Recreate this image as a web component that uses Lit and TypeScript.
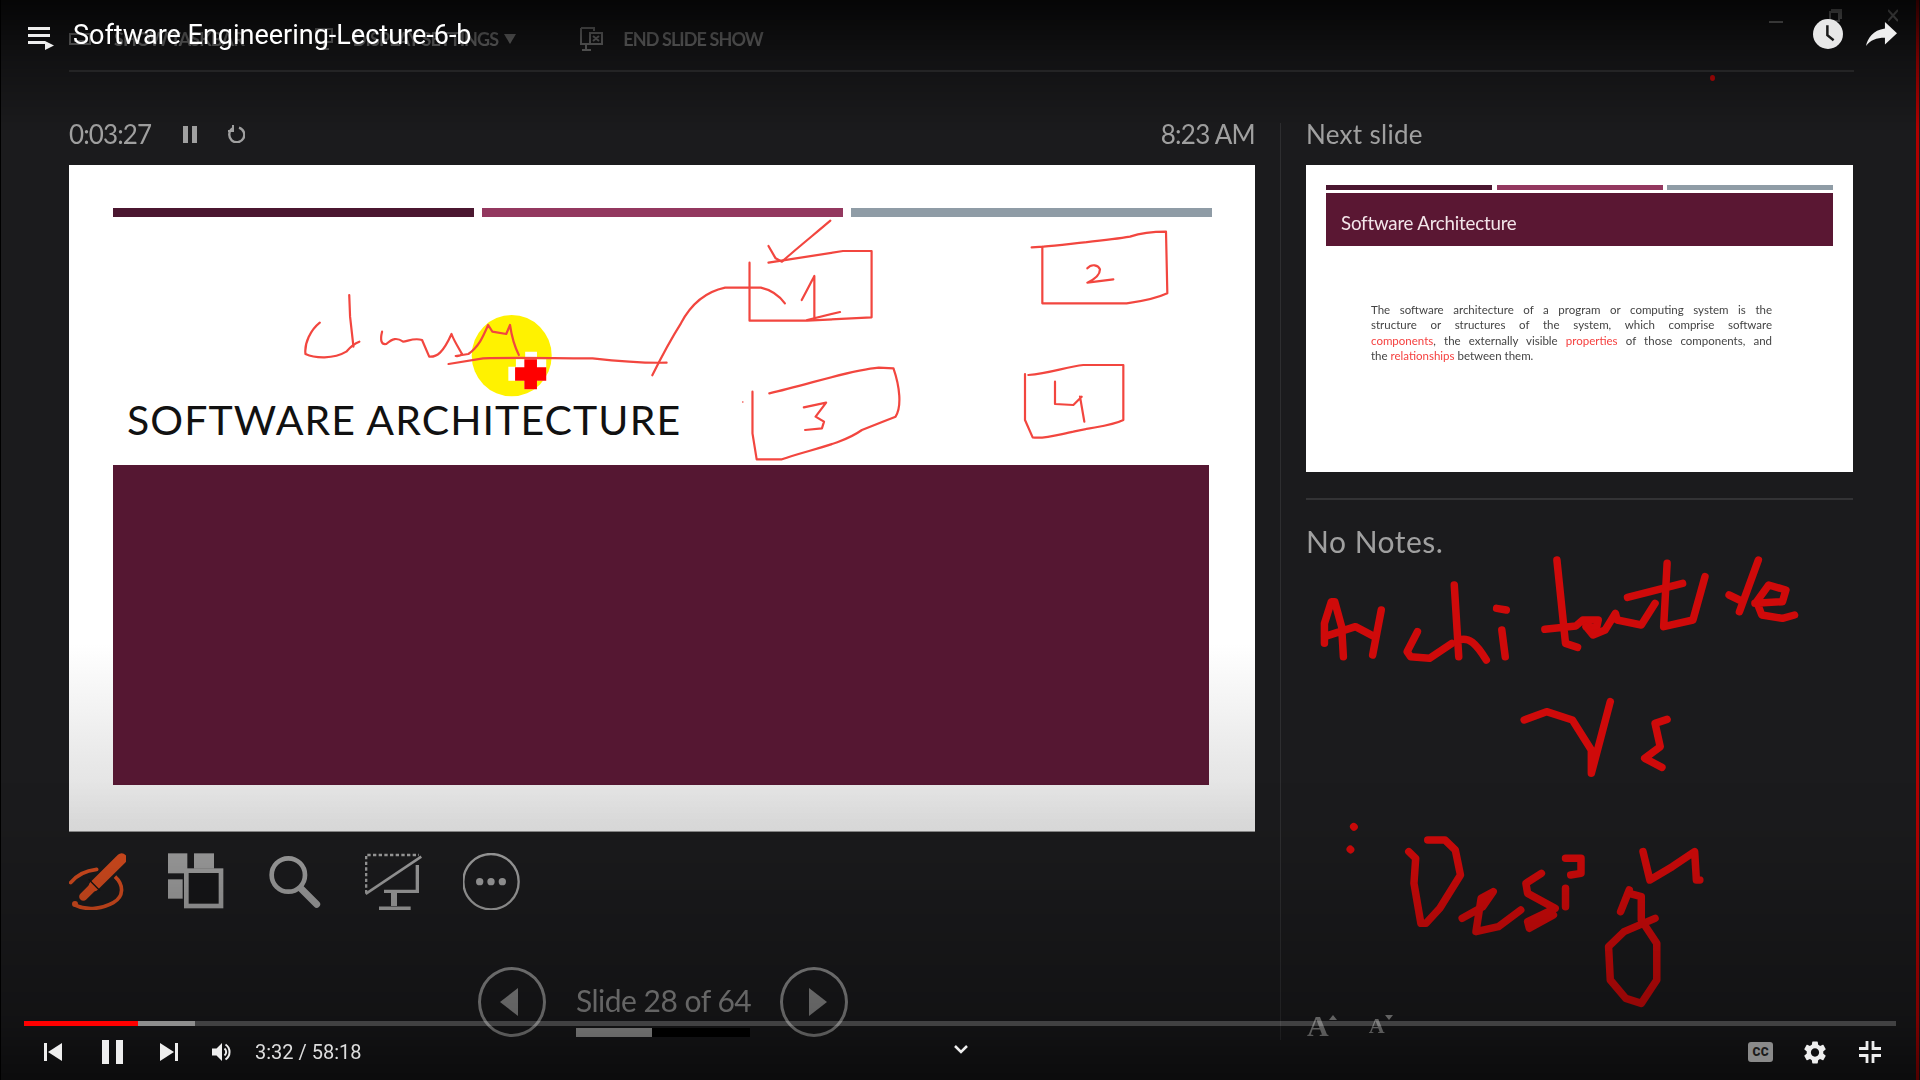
import { LitElement, html, css, svg } from 'lit';
import { customElement } from 'lit/decorators.js';

// pen strokes, in the coordinates of each overlay's viewBox
const SLIDE_INK_LEFT = [
  'M142 368C120 390 105 430 108 462C130 475 175 478 205 455C215 440 225 430 236 425',
  'M212 285L214 350L222 440',
  'M290 395C285 420 288 435 300 432C315 415 325 412 340 425C350 425 365 412 385 420L402 470C420 472 435 458 455 402C460 420 470 440 480 462C475 470 470 468 465 468L495 462C520 440 530 410 542 375L552 395L585 402L594 375C598 410 605 440 615 465',
  'M448 492L530 475C600 472 700 475 790 475C840 482 900 490 966 488',
  'M932 526C950 480 970 430 1000 370C1025 310 1060 275 1105 263L1190 263C1215 270 1235 290 1247 310',
  'M1163 188L1163 362L1300 362L1453 352L1453 153L1385 153L1208 188',
  'M1208 138L1225 175L1240 185C1280 140 1320 100 1355 62',
  'M1287 300C1300 270 1310 245 1317 228L1317 360M1300 360L1378 336',
  'M1170 575L1170 700L1180 778L1240 778C1300 750 1380 735 1430 690L1510 650C1525 620 1520 560 1505 505L1470 503C1400 510 1300 555 1210 580',
  'M1292 622L1345 608L1320 650L1340 665L1335 685L1295 690',
];

const SLIDE_INK_RIGHT = [
  'M395 142L430 140C520 130 620 122 690 110C720 100 760 95 798 95L802 280C770 295 720 305 680 310L427 310L427 140',
  'M562 205C575 190 595 195 600 208C600 225 580 240 562 248L640 238',
  'M375 522L375 660L398 712C430 718 470 705 520 695C580 680 630 680 670 660L670 495L550 495C500 500 450 520 385 525',
  'M465 545L465 612L520 615L545 590M540 590L553 665',
];

const NOTES_INK = [
  'M100 370L100 310L120 245L130 245L150 320L155 410M100 350L190 320L245 350M265 270L240 405',
  'M370 335L340 395L350 410L405 415L470 370',
  'M477 195L490 410M490 360C520 350 540 370 570 420',
  'M600 265L628 270M615 330L625 410',
  'M775 120L800 370L835 382M740 328L830 318L850 300L895 300L890 325L860 320',
  'M860 320L880 345L915 330L945 280L950 300L1020 315L1060 250',
  'M980 232L1140 190',
  'M1095 130L1085 320L1170 300L1205 170',
  'M1360 120L1305 275M1275 225L1305 240',
  'M1350 250L1430 245L1440 210L1390 195L1355 245L1370 285L1430 295L1465 285',
  'M680 600L745 575L820 600L875 690L875 760L930 545',
  'M1095 598L1060 610L1075 680L1030 715L1080 742',
  'M185 920L186 921M175 988L176 989',
  'M345 995L365 1015L360 1090L380 1210L395 1210L435 1165L495 1065L480 990L450 960L400 960',
  'M500 1195L560 1160L590 1115L555 1135L540 1235L605 1220L670 1170',
  'M730 1060L685 1090L690 1120L770 1165L690 1205L695 1225L765 1185',
  'M800 1105L800 1160',
  'M800 1015L845 1015L845 1060L815 1065',
  'M985 1110L960 1175',
  'M985 1120L1020 1130L1020 1200L1065 1270L1065 1380L1020 1450L975 1435L930 1380L925 1280L970 1235L1060 1195',
  'M1025 995L1045 1080L1110 1040L1175 995L1180 1080L1190 1080',
];

const strokes = (paths: string[]) => paths.map((d) => svg`<path d=${d}></path>`);

@customElement('app-root')
export class AppRoot extends LitElement {
  static styles = css`
    :host {
      display: block;
      width: 1920px;
      height: 1080px;
      overflow: hidden;
      position: relative;
      background: #1b1b1d;
      font-family: Lato, 'Liberation Sans', sans-serif;
    }

    /* the recorded PowerPoint window */
    .presenter {
      width: 1920px;
      height: 1080px;
      position: relative;
      filter: blur(0.5px);
    }

    .toolbar {
      margin: 0 66px 0 69px;
      padding-top: 7px;
      box-sizing: border-box;
      border-bottom: 2px solid #333335;
      height: 72px;
      display: flex;
      align-items: center;
      color: #858585;
      font-size: 18px;
      font-weight: 700;
      letter-spacing: -0.9px;
    }
    .toolbar svg { fill: none; stroke: #858585; stroke-width: 2; }
    .tb-show { margin-left: 23px; }
    .tb-icon2 { margin-left: 71px; }
    .tb-display { margin-left: 20px; }
    .toolbar .tb-caret { margin-left: 6px; fill: #858585; stroke: none; }
    .tb-icon3 { margin-left: 64px; }
    .tb-end { margin-left: 20px; }

    .win {
      position: absolute;
      top: 9px;
      right: 22px;
      display: flex;
      gap: 46px;
      align-items: flex-start;
    }
    .win svg { fill: none; stroke: #909090; stroke-width: 2; }

    .body {
      display: grid;
      grid-template-columns: 1186px 51px 547px;
      padding: 45px 0 0 69px;
      height: 963px;
    }

    .stat {
      height: 34px;
      margin-bottom: 14px;
      display: flex;
      align-items: center;
      color: #a0a0a0;
      font-size: 26px;
      font-weight: 400;
    }
    .stat .timer { letter-spacing: -0.9px; }
    .stat svg { margin-left: 32px; }
    .stat .replay { margin-left: 30px; }
    .stat .clock { margin-left: auto; letter-spacing: -0.7px; }
    .stat .next { letter-spacing: 0.3px; }

    .slide {
      position: relative;
      height: 667px;
      box-sizing: border-box;
      padding: 43px 43px 46px 44px;
      background: linear-gradient(#fff 72%, #e8e8e8 90%, #dedede);
      border-bottom: 1px solid #888;
      display: flex;
      flex-direction: column;
      color: #111;
    }
    .bars { display: flex; gap: 8.5px; height: 9px; flex-shrink: 0; }
    .bars div { flex: 1; }
    .bar-a { background: #4b1730; }
    .bar-b { background: #93385f; }
    .bar-c { background: #8f9ca6; }
    .slide h1 {
      margin: 178px 0 20px 14px;
      height: 50px;
      line-height: 50px;
      font-size: 41px;
      font-weight: 400;
      letter-spacing: 1.1px;
      white-space: nowrap;
    }
    .panel { flex: 1; margin-right: 3px; background: #551732; }

    .ink {
      position: absolute;
      fill: none;
      stroke-linecap: round;
      stroke-linejoin: round;
    }
    .ink path { vector-effect: non-scaling-stroke; }
    .ink-slide { stroke: #f2463f; stroke-width: 2.2px; }
    .ink-a { left: 191px; top: 35px; }
    .ink-b { left: 831px; top: 35px; }
    .ink-notes {
      left: 1290px;
      top: 520px;
      stroke: #cf0a0a;
      stroke-width: 7.5px;
    }
    .laser {
      position: absolute;
      left: 1710px;
      top: 75px;
      width: 5px;
      height: 6px;
      border-radius: 50%;
      background: #c10808;
    }
    .edge-right {
      position: absolute;
      left: 1916px;
      top: 0;
      width: 3px;
      height: 1080px;
      background: #b00000;
    }
    .edge-left {
      position: absolute;
      left: 0;
      top: 0;
      width: 1px;
      height: 1080px;
      background: #000;
    }

    .tools {
      margin-top: 21px;
      height: 57px;
      display: flex;
      gap: 41.5px;
    }
    .tools svg { fill: none; stroke: #9c9c9c; display: block; }

    .nav {
      margin-top: 57px;
      display: flex;
      justify-content: center;
      gap: 30px;
      padding-left: 2px;
      color: #8c8c8c;
    }
    .round {
      width: 68px;
      height: 70px;
      box-sizing: border-box;
      border: 3px solid #8a8a8a;
      border-radius: 50%;
      display: flex;
      align-items: center;
      justify-content: center;
    }
    .round svg { fill: #8a8a8a; }
    .round .back { margin-right: 6px; }
    .round .fwd { margin-left: 8px; }
    .count { width: 174px; }
    .count-label {
      height: 61px;
      box-sizing: border-box;
      padding-top: 8px;
      line-height: 51px;
      font-size: 30px;
      font-weight: 400;
      white-space: nowrap;
      letter-spacing: -0.5px;
    }
    .count-bar { height: 9px; background: #000; }
    .count-fill { width: 76px; height: 9px; background: #a4a4a4; }

    .divider { width: 1px; margin: 6px 0 40px 25px; background: #2e2e30; }

    .side { display: flex; flex-direction: column; }
    .thumb {
      height: 307px;
      box-sizing: border-box;
      padding: 20px 20px 0;
      background: #fff;
    }
    .thumb .bars { height: 5px; gap: 4.5px; margin-bottom: 3px; }
    .thumb-head {
      height: 53px;
      box-sizing: border-box;
      padding: 6px 0 0 15px;
      display: flex;
      align-items: center;
      background: #5a1733;
      color: #f3e6ea;
      font-size: 18.7px;
      letter-spacing: -0.2px;
    }
    .thumb-text {
      margin: 56px 61px 0 45px;
      font-size: 11.5px;
      line-height: 15.4px;
      color: #444;
    }
    .thumb-text div { text-align: justify; text-align-last: justify; }
    .thumb-text div.last { text-align-last: left; }
    .thumb-text b { font-weight: 400; color: #f5403f; }

    .rule { height: 2px; margin-top: 26px; background: #333335; }
    .notes {
      margin-top: 22px;
      font-size: 30px;
      font-weight: 400;
      line-height: 38px;
      letter-spacing: 0.5px;
      color: #a0a0a0;
    }
    .font-btns {
      margin-top: auto;
      margin-bottom: 44px;
      padding-left: 1px;
      display: flex;
      align-items: flex-end;
      height: 21px;
      font-family: 'Liberation Serif', serif;
      font-weight: 700;
      color: #8c8c8c;
      line-height: 21px;
    }
    .font-btns svg { fill: #8c8c8c; align-self: flex-start; }
    .font-up { font-size: 30px; }
    .font-down { font-size: 22px; margin-left: 32px; }

    /* YouTube player chrome on top of the video */
    .shade-top, .shade-bottom { position: absolute; left: 0; width: 1920px; }
    .shade-top {
      top: 0;
      height: 130px;
      background: linear-gradient(rgba(0, 0, 0, 0.78), rgba(0, 0, 0, 0.35) 45%, rgba(0, 0, 0, 0));
    }
    .shade-bottom {
      bottom: 0;
      height: 300px;
      background: linear-gradient(rgba(0, 0, 0, 0), rgba(0, 0, 0, 0.04) 20%, rgba(0, 0, 0, 0.3) 80%, rgba(0, 0, 0, 0.55));
    }

    .yt-top {
      position: absolute;
      left: 0;
      top: 0;
      width: 1920px;
      height: 68px;
      box-sizing: border-box;
      padding: 0 23px 0 28px;
      display: flex;
      align-items: center;
      color: #fff;
      font-family: Roboto, sans-serif;
    }
    .yt-menu { margin-top: 10px; }
    .yt-title { margin: 2px 0 0 19px; font-size: 27px; white-space: nowrap; }
    .yt-clock { margin-left: auto; display: block; }
    .yt-share { margin-left: 23px; display: block; }

    .yt-bottom {
      position: absolute;
      left: 0;
      top: 1021px;
      width: 1920px;
      font-family: Roboto, sans-serif;
      color: #ddd;
    }
    .progress {
      margin: 0 24px;
      height: 5px;
      display: flex;
      background: rgba(255, 255, 255, 0.2);
    }
    .played { width: 114px; background: #f00; }
    .loaded { width: 57px; background: #8e8e8e; }
    .controls { height: 52px; display: flex; align-items: center; }
    .left, .right { flex: 1; display: flex; align-items: center; }
    .left { padding-left: 24px; }
    .right { padding-right: 23px; justify-content: flex-end; }
    .btn { width: 58px; display: flex; justify-content: center; align-items: center; }
    .btn svg { fill: #eee; display: block; }
    .btn .pause { margin-left: 3px; }
    .btn-vol { width: 48px; }
    .btn-r { width: 54.5px; }
    .time { margin-left: 9px; font-size: 20px; white-space: nowrap; }
    .chevron { display: block; margin-bottom: 6px; fill: none; stroke: #eee; stroke-width: 2.5; }
    .cc {
      width: 25px;
      height: 20px;
      border-radius: 3px;
      background: #8a8a8a;
      color: #1c1c1c;
      font-size: 12px;
      font-weight: 900;
      line-height: 20px;
      text-align: center;
      letter-spacing: 0.5px;
    }
  `;

  render() {
    return html`
      <div class="presenter">
        <div class="toolbar">
          <svg width="22" height="12" viewBox="0 0 22 12"><rect x="1" y="1" width="20" height="10"></rect><path d="M5 8h12"></path></svg>
          <span class="tb-show">SHOW TASKBAR</span>
          <svg class="tb-icon2" width="18" height="22" viewBox="0 0 18 22"><path d="M1 1h16v13H1zM9 14v7M4 21h10"></path></svg>
          <span class="tb-display">DISPLAY SETTINGS</span>
          <svg class="tb-caret" width="12" height="10" viewBox="0 0 12 10"><path d="M0 0h12L6 10z"></path></svg>
          <svg class="tb-icon3" width="23" height="24" viewBox="0 0 23 24"><path d="M1 1h13v3M1 1v16h9M6 17v6M2 23h9M10 6h12v11H10zM13 9l6 5M19 9l-6 5"></path></svg>
          <span class="tb-end">END SLIDE SHOW</span>
        </div>
        <div class="win">
          <svg width="14" height="14" viewBox="0 0 14 14"><path d="M0 13h14"></path></svg>
          <svg width="13" height="13" viewBox="0 0 13 13"><path d="M3 3V1h9v8h-2M1 3h9v9H1z"></path></svg>
          <svg width="10" height="13" viewBox="0 0 10 13"><path d="M0 1l10 11M10 1L0 12"></path></svg>
        </div>

        <div class="body">
          <div class="main">
            <div class="stat">
              <span class="timer">0:03:27</span>
              <svg width="14" height="17" viewBox="0 0 14 17" fill="#a0a0a0"><rect width="5" height="17"></rect><rect x="9" width="5" height="17"></rect></svg>
              <svg class="replay" width="18" height="18" viewBox="0 0 18 18" fill="none" stroke="#a0a0a0" stroke-width="2.4"><path d="M5.5 3.6A7.5 7.5 0 1 0 12 2.6"></path><path d="M6 0v6H1" stroke-width="2"></path></svg>
              <span class="clock">8:23 AM</span>
            </div>
            <div class="slide">
              <div class="bars"><div class="bar-a"></div><div class="bar-b"></div><div class="bar-c"></div></div>
              <h1>SOFTWARE ARCHITECTURE</h1>
              <div class="panel"></div>
              <svg class="ink ink-slide ink-a" width="660" height="280" viewBox="0 0 1568 840" preserveAspectRatio="none">
                <ellipse cx="598" cy="467" rx="95" ry="122" fill="#fff200" stroke="none"></ellipse>
                <path d="M630 455h28v23h22v64h-22v26h-30v-26h-38v-42h18v-22h22z" fill="#fff" stroke="none"></path>
                ${strokes(SLIDE_INK_LEFT)}
                <path d="M628 478h30v24h22v40h-22v26h-30v-26h-22v-40h22z" fill="#f00" stroke="none"></path>
                <circle cx="1147" cy="606" r="2" fill="#f0453f" stroke="none"></circle>
              </svg>
              <svg class="ink ink-slide ink-b" width="340" height="280" viewBox="0 0 1020 840" preserveAspectRatio="none">
                ${strokes(SLIDE_INK_RIGHT)}
              </svg>
            </div>
            <div class="tools">
              <svg width="57" height="57" viewBox="57 69 171 171">
                <path d="M62 158C80 135 105 122 140 118" stroke="#d04a1e" stroke-width="11" stroke-linecap="round"></path>
                <path d="M195 140C222 165 222 200 190 218C150 240 105 240 75 225" stroke="#d04a1e" stroke-width="11"></path>
                <circle cx="75" cy="222" r="9" fill="#d04a1e" stroke="none"></circle>
                <path d="M215 86L132 168" stroke="#d04a1e" stroke-width="32" stroke-linecap="round"></path>
                <path d="M132 168L100 200" stroke="#d04a1e" stroke-width="25" stroke-linecap="round"></path>
                <path d="M116 148L150 182" stroke="#141414" stroke-width="4"></path>
              </svg>
              <svg width="57" height="57" viewBox="352 69 171 171">
                <g fill="#9c9c9c" stroke="none">
                  <rect x="352" y="70" width="58" height="60"></rect>
                  <rect x="430" y="70" width="60" height="46"></rect>
                  <rect x="352" y="148" width="44" height="58"></rect>
                </g>
                <rect x="407" y="122" width="104" height="106" fill="#161618" stroke-width="14"></rect>
              </svg>
              <svg width="57" height="57" viewBox="648 69 171 171">
                <circle cx="715" cy="135" r="50" stroke-width="14"></circle>
                <path d="M755 178L800 223" stroke-width="21" stroke-linecap="round"></path>
              </svg>
              <svg width="57" height="57" viewBox="943 69 171 171">
                <path d="M946 190V75H1105" stroke-width="8" stroke-dasharray="10 7"></path>
                <path d="M945 192L1112 80" stroke-width="8"></path>
                <path d="M1100 105V184H1000" stroke-width="10"></path>
                <path d="M1030 184V228" stroke-width="18"></path>
                <path d="M985 235H1080" stroke-width="11"></path>
              </svg>
              <svg width="57" height="57" viewBox="1239 69 171 171">
                <circle cx="1323" cy="155" r="83" stroke-width="7"></circle>
                <g fill="#9c9c9c" stroke="none">
                  <circle cx="1289" cy="155" r="11"></circle>
                  <circle cx="1323" cy="155" r="11"></circle>
                  <circle cx="1357" cy="155" r="11"></circle>
                </g>
              </svg>
            </div>
            <div class="nav">
              <div class="round"><svg class="back" width="18" height="28" viewBox="0 0 18 28"><path d="M18 0v28L0 14z"></path></svg></div>
              <div class="count">
                <div class="count-label">Slide 28 of 64</div>
                <div class="count-bar"><div class="count-fill"></div></div>
              </div>
              <div class="round"><svg class="fwd" width="18" height="28" viewBox="0 0 18 28"><path d="M0 0v28l18-14z"></path></svg></div>
            </div>
          </div>

          <div class="divider"></div>

          <div class="side">
            <div class="stat"><span class="next">Next slide</span></div>
            <div class="thumb">
              <div class="bars"><div class="bar-a"></div><div class="bar-b"></div><div class="bar-c"></div></div>
              <div class="thumb-head">Software Architecture</div>
              <div class="thumb-text">
                <div>The software architecture of a program or computing system is the</div>
                <div>structure or structures of the system, which comprise software</div>
                <div><b>components</b>, the externally visible <b>properties</b> of those components, and</div>
                <div class="last">the <b>relationships</b> between them.</div>
              </div>
            </div>
            <div class="rule"></div>
            <div class="notes">No Notes.</div>
            <div class="font-btns">
              <span class="font-up">A</span>
              <svg width="8" height="5" viewBox="0 0 8 5"><path d="M4 0l4 5H0z"></path></svg>
              <span class="font-down">A</span>
              <svg width="8" height="5" viewBox="0 0 8 5"><path d="M0 0h8L4 5z"></path></svg>
            </div>
          </div>
        </div>

        <svg class="ink ink-notes" width="540" height="500" viewBox="0 0 1568 1500" preserveAspectRatio="none">
          ${strokes(NOTES_INK)}
        </svg>
        <div class="laser"></div>
        <div class="edge-left"></div>
        <div class="edge-right"></div>
      </div>

      <div class="shade-top"></div>
      <div class="shade-bottom"></div>

      <div class="yt-top">
        <svg class="yt-menu" width="26" height="24" viewBox="0 0 26 24" fill="#eee">
          <rect y="0" width="22" height="3"></rect>
          <rect y="7" width="22" height="3"></rect>
          <rect y="14" width="17" height="3"></rect>
          <path d="M17 14l9 4.5-9 4.5z"></path>
        </svg>
        <span class="yt-title">Software Engineering-Lecture-6-b</span>
        <svg class="yt-clock" width="30" height="30" viewBox="0 0 24 24">
          <circle cx="12" cy="12" r="12" fill="#e8e8e8"></circle>
          <path d="M11.5 5v8l5 4" fill="none" stroke="#1a1a1a" stroke-width="2"></path>
        </svg>
        <svg class="yt-share" width="31" height="24" viewBox="3 5 18 15" preserveAspectRatio="none">
          <path d="M14 9V5l7 7-7 7v-4.1c-5 0-8.5 1.6-11 5.1 1-5 4-10 11-11z" fill="#eee"></path>
        </svg>
      </div>

      <div class="yt-bottom">
        <div class="progress"><div class="played"></div><div class="loaded"></div></div>
        <div class="controls">
          <div class="left">
            <div class="btn"><svg width="18" height="18" viewBox="0 0 18 18"><rect width="3" height="18"></rect><path d="M18 0v18L4 9z"></path></svg></div>
            <div class="btn"><svg class="pause" width="21" height="24" viewBox="0 0 21 24"><rect width="7" height="24"></rect><rect x="14" width="7" height="24"></rect></svg></div>
            <div class="btn"><svg width="18" height="18" viewBox="0 0 18 18"><path d="M0 0v18l14-9z"></path><rect x="15" width="3" height="18"></rect></svg></div>
            <div class="btn btn-vol"><svg width="22" height="22" viewBox="0 0 22 22">
              <path d="M1 7.5h4.5L11 2v18l-5.5-5.5H1z"></path>
              <path d="M13.5 7.5a4.5 4.5 0 0 1 0 7M14.5 3.5a9 9 0 0 1 0 15" fill="none" stroke="#eee" stroke-width="2"></path>
            </svg></div>
            <span class="time">3:32 / 58:18</span>
          </div>
          <svg class="chevron" width="14" height="9" viewBox="0 0 14 9"><path d="M1 1l6 6 6-6"></path></svg>
          <div class="right">
            <div class="btn btn-r"><div class="cc">CC</div></div>
            <div class="btn btn-r"><svg width="22" height="23" viewBox="2.5 2 19 20">
              <path d="M19.14 12.94c.04-.3.06-.61.06-.94 0-.32-.02-.64-.07-.94l2.03-1.58c.18-.14.23-.41.12-.61l-1.92-3.32c-.12-.22-.37-.29-.59-.22l-2.39.96c-.5-.38-1.03-.7-1.62-.94l-.36-2.54c-.04-.24-.24-.41-.48-.41h-3.84c-.24 0-.43.17-.47.41l-.36 2.54c-.59.24-1.13.57-1.62.94l-2.39-.96c-.22-.08-.47 0-.59.22L2.74 8.87c-.12.21-.08.47.12.61l2.03 1.58c-.05.3-.09.63-.09.94s.02.64.07.94l-2.03 1.58c-.18.14-.23.41-.12.61l1.92 3.32c.12.22.37.29.59.22l2.39-.96c.5.38 1.03.7 1.62.94l.36 2.54c.05.24.24.41.48.41h3.84c.24 0 .44-.17.47-.41l.36-2.54c.59-.24 1.13-.56 1.62-.94l2.39.96c.22.08.47 0 .59-.22l1.92-3.32c.12-.22.07-.47-.12-.61l-2.01-1.58zM12 15.6c-1.98 0-3.6-1.62-3.6-3.6s1.62-3.6 3.6-3.6 3.6 1.62 3.6 3.6-1.62 3.6-3.6 3.6z"></path>
            </svg></div>
            <div class="btn btn-r"><svg width="22" height="22" viewBox="0 0 22 22">
              <path d="M8 0v7.5H0M14 0v7.5h8M8 22v-7.5H0M14 22v-7.5h8" fill="none" stroke="#eee" stroke-width="2.8"></path>
            </svg></div>
          </div>
        </div>
      </div>
    `;
  }
}
